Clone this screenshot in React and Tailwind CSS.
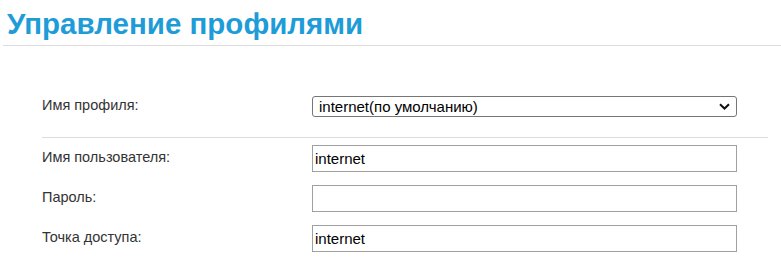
import React from "react";

const font = { fontFamily: '"Liberation Sans", Arial, sans-serif' };

function Row({ label, children }) {
  return (
    <div className="flex h-[40px] items-center">
      <div className="w-[270px] shrink-0 text-[14.5px] text-[#333]">{label}</div>
      {children}
    </div>
  );
}

function TextInput({ value }) {
  return (
    <input
      type="text"
      defaultValue={value}
      className="h-[27px] w-[425px] border border-[#a0a0a0] bg-white px-[2px] text-[15px] text-black outline-none"
      style={font}
    />
  );
}

export default function App() {
  return (
    <div className="h-[275px] w-[781px] overflow-hidden bg-white" style={font}>
      <div className="ml-[3px]">
        <h1 className="border-b border-[#dcdcdc] pb-[4px] pl-[4px] pt-[7px] text-[29.5px] font-bold leading-[34px] text-[#1e9cd7]">
          Управление профилями
        </h1>
      </div>
      <div className="ml-[42px] mt-[40px] w-[726px]">
        <Row label="Имя профиля:">
          <div className="relative">
            <select
              className="block h-[21px] w-[425px] appearance-none rounded-[3px] border border-[#767676] bg-white pl-[6px] text-[15px] leading-[19px] text-black outline-none"
              style={font}
              defaultValue="internet"
            >
              <option value="internet">internet(по умолчанию)</option>
            </select>
            <svg
              className="pointer-events-none absolute right-[7px] top-[7px]"
              width="11"
              height="7"
              viewBox="0 0 11 7"
              fill="none"
            >
              <path d="M1 1.2 L5.5 5.5 L10 1.2" stroke="#111" strokeWidth="2" />
            </svg>
          </div>
        </Row>
        <div className="mt-[11px] border-t border-[#dcdcdc]" />
        <Row label="Имя пользователя:">
          <TextInput value="internet" />
        </Row>
        <Row label="Пароль:">
          <TextInput value="" />
        </Row>
        <Row label="Точка доступа:">
          <TextInput value="internet" />
        </Row>
      </div>
    </div>
  );
}
